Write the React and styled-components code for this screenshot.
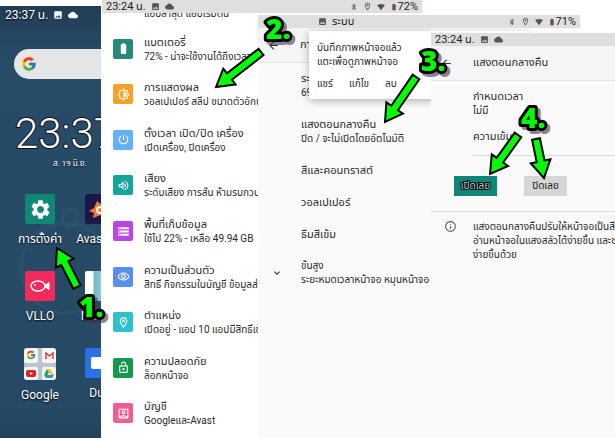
import styled, { createGlobalStyle, css } from "styled-components"
import {
    MdBatteryFull, MdOutlineBrightness6, MdPowerSettingsNew, MdOutlineVolumeUp, MdStorage,
    MdOutlineLocationOn, MdOutlineLockOpen, MdOutlineAccountBox, MdOutlineRemoveRedEye, MdSettings,
    MdImage, MdCloud, MdBluetooth, MdSignalWifi4Bar, MdArrowBack, MdKeyboardArrowDown, MdInfoOutline,
} from "react-icons/md"
import { FcGoogle } from "react-icons/fc"

const GlobalStyle = createGlobalStyle`
    * {
        box-sizing : border-box;
    }
    body {
        margin : 0;
        background : #fff;
        color : #2a2a2a;
        font-family : Roboto, "Noto Sans Thai", "Noto Sans", sans-serif;
        font-size : 10px;
        line-height : 14px;
    }
`
const Stage = styled.main`
    position : relative;
    display : grid;
    grid-template-columns : minmax(0, 101fr) minmax(0, 157fr) minmax(0, 172fr) minmax(0, 185fr);
    grid-template-rows : 13px 2px 13px 5px 1fr;
    min-height : 100vh;
    overflow : hidden;
`

const StatusBar = styled.header`
    display : flex;
    align-items : center;
    gap : 5px;
    height : 13px;
    padding : 0 4px;
    background : #dfdfdf;
    color : #222;
    font-size : 11px;
    white-space : nowrap;
    svg {
        color : #555;
        flex : none;
    }
`
const ListStatus = styled(StatusBar)`
    grid-area : 1 / 2 / 2 / 4;
    margin : 0 8px 0 1px;
    z-index : 2;
`
const DisplayStatus = styled(StatusBar)`
    grid-area : 3 / 3 / 4 / 5;
    margin-right : 35px;
    z-index : 2;
`
const Spacer = styled.span`
    flex : ${p => p.$width ? `0 0 ${p.$width}px` : 1};
`
const Battery = styled.span`
    display : flex;
    align-items : center;
`

const Home = styled.section`
    grid-area : 1 / 1 / 6 / 2;
    margin-top : 6px;
    overflow : hidden;
    color : #fff;
    background :
        radial-gradient(circle at 66px 262px, transparent 43px, #2d5270 45px, transparent 47px),
        radial-gradient(circle at 70px 212px, transparent 6px, #2f5470 8px, transparent 10px),
        linear-gradient(#213d54, #274c68 50px, #264a66 400px, #234259);
    text-shadow : 0 1px 2px #000;
`
const HomeStatus = styled.div`
    display : flex;
    align-items : center;
    gap : 5px;
    padding : 0 5px;
    height : 17px;
    font-size : 12px;
    white-space : nowrap;
`
const Search = styled.div`
    display : flex;
    align-items : center;
    height : 30px;
    margin : 26px 0 0 14px;
    padding-left : 7px;
    border-radius : 15px 0 0 15px;
    background : #e4e6e7;
`
const Clock = styled.div`
    margin : 30px 0 0 15px;
    font-size : 42px;
    font-weight : 300;
    line-height : 50px;
    -webkit-text-stroke : 2px #111;
    paint-order : stroke fill;
    text-shadow : none;
`
const Today = styled.div`
    padding-left : 53px;
    font-size : 8px;
    line-height : 10px;
    white-space : nowrap;
`
const Apps = styled.div`
    display : grid;
    grid-template-columns : 60px 60px;
    grid-auto-rows : 77px;
    margin : 25px 0 0 10px;
`
const AppLink = styled.a`
    display : flex;
    flex-direction : column;
    align-items : center;
    gap : 8px;
    color : #fff;
    text-decoration : none;
    white-space : nowrap;
    font-size : 12px;
`
const AppIcon = styled.span`
    display : flex;
    align-items : center;
    justify-content : center;
    flex : none;
    width : 30px;
    height : 30px;
    border-radius : 2px;
    background : ${p => p.$color};
`
const Folder = styled.span`
    display : grid;
    grid-template-columns : 1fr 1fr;
    gap : 4px;
    width : 32px;
    height : 32px;
    border-radius : 3px;
    background : #bcc3c8;
    overflow : hidden;
`
const FolderCell = styled.span`
    display : flex;
    align-items : center;
    justify-content : center;
    background : #f4f5f6;
    border-radius : 2px;
`

const Settings = styled.section`
    grid-area : 1 / 2 / 6 / 3;
    display : flex;
    flex-direction : column;
    min-width : 0;
    margin-left : 1px;
    padding : 13px 0 2px;
    overflow : hidden;
    background : #fff;
    white-space : nowrap;
`
const Previous = styled.div`
    height : 13px;
    padding-left : 42px;
    overflow : hidden;
    line-height : 2px;
`
const SettingRow = styled.a`
    display : flex;
    flex : 1;
    align-items : center;
    gap : 11px;
    padding-left : 11px;
    color : inherit;
    text-decoration : none;
`
const RowText = styled.div`
    padding-top : 2px;
`
const Tile = styled.span`
    display : flex;
    align-items : center;
    justify-content : center;
    flex : none;
    width : 20px;
    height : 20px;
    border-radius : 2px;
    color : #fff;
    background : ${p => p.$color};
`
const RowTitle = styled.div`
    font-size : 11px;
`

const Display = styled.section`
    grid-area : 4 / 3 / 6 / 4;
    min-width : 0;
    overflow : hidden;
    background : #fafafa;
    white-space : nowrap;
`
const TitleBar = styled.div`
    display : flex;
    align-items : center;
    height : 35px;
    background : #f5f5f5;
    border-bottom : 1px solid #e3e3e3;
    font-size : 11px;
`
const BackButton = styled.button`
    display : flex;
    align-items : center;
    flex : none;
    width : 42px;
    padding : 0 0 0 9px;
    border : none;
    background : none;
    color : #333;
`
const Options = styled.div`
    display : flex;
    flex-direction : column;
    gap : 18px;
    padding : 9px 0 0 43px;
`
const More = styled.button`
    display : flex;
    align-items : center;
    margin-top : 17px;
    padding : 0;
    border : none;
    background : none;
    color : inherit;
    font : inherit;
    text-align : left;
    svg {
        flex : none;
        margin : 0 18px 0 13px;
    }
`
const Toast = styled.div`
    grid-area : 4 / 3 / 6 / 5;
    align-self : start;
    margin : 3px 86px 0 51px;
    padding : 10px 9px 8px 8px;
    background : #fff;
    box-shadow : 0 2px 8px rgba(0,0,0,0.3);
    white-space : nowrap;
`
const ToastActions = styled.div`
    display : flex;
    gap : 16px;
    margin-top : 8px;
`
const TextButton = styled.button`
    padding : 0;
    border : none;
    background : none;
    color : inherit;
    font : inherit;
`

const Night = styled.section`
    grid-area : 5 / 4 / 6 / 5;
    z-index : 1;
    min-width : 0;
    overflow : hidden;
    margin-left : 1px;
    background : #fafafa;
    white-space : nowrap;
`
const Field = styled.div`
    margin-left : 42px;
    padding-top : ${p => p.$top}px;
    ${p => p.$line && css`
        padding-bottom : 11px;
        border-bottom : 1px solid #d8d8d8;
    `}
`
const Buttons = styled.div`
    display : flex;
    align-items : center;
    gap : 27px;
    padding : 20px 0 15px 23px;
    border-bottom : 1px solid #dedede;
`
const Choice = styled.button`
    width : 43px;
    height : 20px;
    padding : 0;
    border : none;
    background : #d6d6d6;
    color : #222;
    font : inherit;
    ${p => p.$on && css`
        background : #0e8577;
        color : #a9d3cd;
        -webkit-text-stroke : 2px #000;
        paint-order : stroke fill;
    `}
`
const Note = styled.div`
    display : flex;
    gap : 16px;
    padding : 8px 0 0 13px;
    svg {
        flex : none;
        color : #666;
    }
`

const Marks = styled.svg`
    position : absolute;
    top : 0;
    left : 0;
    z-index : 3;
    pointer-events : none;
`
const Step = styled.text`
    font-family : "Open Sans", "DejaVu Sans", sans-serif;
    font-size : 28px;
    font-weight : 800;
    fill : #0f0;
    stroke : #000;
    stroke-width : 6px;
    stroke-linejoin : round;
    paint-order : stroke fill;
    filter : drop-shadow(3px 3px 0 rgba(70,50,75,0.6));
`

const settings = [
    { title : "แบตเตอรี่", sub : "72% - น่าจะใช้งานได้ถึงเวลา", color : "#27897a", Icon : MdBatteryFull },
    { title : "การแสดงผล", sub : "วอลเปเปอร์ สลีป ขนาดตัวอักษร", color : "#f9a126", Icon : MdOutlineBrightness6 },
    { title : "ตั้งเวลา เปิด/ปิด เครื่อง", sub : "เปิดเครื่อง, ปิดเครื่อง", color : "#64b0f6", Icon : MdPowerSettingsNew },
    { title : "เสียง", sub : "ระดับเสียง การสั่น ห้ามรบกวน", color : "#15a698", Icon : MdOutlineVolumeUp },
    { title : "พื้นที่เก็บข้อมูล", sub : "ใช้ไป 22% - เหลือ 49.94 GB", color : "#b946e4", Icon : MdStorage },
    { title : "ความเป็นส่วนตัว", sub : "สิทธิ์ กิจกรรมในบัญชี ข้อมูลส่วนตัว", color : "#5b8def", Icon : MdOutlineRemoveRedEye },
    { title : "ตำแหน่ง", sub : "เปิดอยู่ - แอป 10 แอปมีสิทธิ์เข้าถึง", color : "#2fc0cf", Icon : MdOutlineLocationOn },
    { title : "ความปลอดภัย", sub : "ล็อกหน้าจอ", color : "#12984f", Icon : MdOutlineLockOpen },
    { title : "บัญชี", sub : "GoogleและAvast", color : "#ef5e93", Icon : MdOutlineAccountBox },
]

const Arrow = ({ tip, tail }) => {
    const length = Math.hypot(tip[0] - tail[0], tip[1] - tail[1])
    const angle = Math.atan2(tail[1] - tip[1], tail[0] - tip[0]) * 180 / Math.PI
    return (
        <path
            d={`M0 0L17 -10V-4H${length}V4H17V10Z`}
            transform={`translate(${tip[0]} ${tip[1]}) rotate(${angle})`}
            fill="#0f0"
            stroke="#000"
            strokeWidth="2"
        />
    )
}

const Indicators = ({ level }) => (
    <>
        <MdBluetooth size={8}/>
        <MdOutlineLocationOn size={9}/>
        <MdSignalWifi4Bar size={8}/>
        <Battery><MdBatteryFull size={8}/>{level}</Battery>
    </>
)

const HomeScreen = () => (
    <Home>
        <HomeStatus>23:37 น. <MdImage size={10}/><MdCloud size={10}/></HomeStatus>
        <Search><FcGoogle size={16}/></Search>
        <Clock>23:37</Clock>
        <Today>ส. 19 มิ.ย.</Today>
        <Apps>
            <AppLink href="#settings">
                <AppIcon $color="#0f8876"><MdSettings size={23}/></AppIcon>
                การตั้งค่า
            </AppLink>
            <AppLink href="#avast">
                <AppIcon $color="#1c1748">
                    <svg width="24" height="24" viewBox="0 0 24 24">
                        <path d="M9 4L14 8L21 6L20 20L13 18L5 21L6 16L1 14L6 11Z" fill="#f5762a"/>
                        <circle cx="12" cy="13" r="3" fill="none" stroke="#fff" strokeWidth="2"/>
                    </svg>
                </AppIcon>
                Avast An
            </AppLink>
            <AppLink href="#vllo">
                <AppIcon $color="#f52a5c">
                    <svg width="22" height="14" viewBox="0 0 22 14">
                        <ellipse cx="9" cy="7" rx="7" ry="5" fill="none" stroke="#fff" strokeWidth="1.5"/>
                        <path d="M15 7L20 3.500V10.500Z" fill="#fff" stroke="#fff"/>
                        <circle cx="6" cy="6" r="1" fill="#fff"/>
                    </svg>
                </AppIcon>
                VLLO
            </AppLink>
            <AppLink href="#movie">
                <AppIcon $color="linear-gradient(90deg, #fff 8px, #6fb9c4 9px, #cfe8ea)"/>
                Movies
            </AppLink>
            <AppLink href="#google">
                <Folder>
                    <FolderCell><FcGoogle size={10}/></FolderCell>
                    <FolderCell>
                        <svg width="9" height="7" viewBox="0 0 9 7"><path d="M1 7V1L4.500 4L8 1V7" fill="none" stroke="#dd4b3e" strokeWidth="1.6"/></svg>
                    </FolderCell>
                    <FolderCell>
                        <svg width="10" height="7" viewBox="0 0 10 7"><rect width="10" height="7" rx="2" fill="#e02020"/><path d="M4 2L7 3.500L4 5Z" fill="#fff"/></svg>
                    </FolderCell>
                    <FolderCell>
                        <svg width="10" height="9" viewBox="0 0 10 9"><path d="M3 0L0 6L2 9L5 3Z" fill="#1fa463"/><path d="M3 0H6L10 6H7Z" fill="#fbc116"/><path d="M3 6H10L8 9H2Z" fill="#4285f4"/></svg>
                    </FolderCell>
                </Folder>
                Google
            </AppLink>
            <AppLink href="#duo">
                <AppIcon $color="#2a70e8">
                    <svg width="18" height="12" viewBox="0 0 18 12"><rect width="14" height="12" rx="2" fill="#fff"/></svg>
                </AppIcon>
                Duo
            </AppLink>
        </Apps>
    </Home>
)

const App = () => (
    <Stage>
        <GlobalStyle/>
        <HomeScreen/>

        <ListStatus>
            23:24 น. <MdImage size={9}/><MdCloud size={9}/>
            <Spacer/>
            <Indicators level="72%"/>
        </ListStatus>
        <Settings>
            <Previous>แอปล่าสุด แอปเริ่มต้น</Previous>
            {settings.map(({ title, sub, color, Icon }) => (
                <SettingRow key={title} href="#">
                    <Tile $color={color}><Icon size={13}/></Tile>
                    <RowText>
                        <RowTitle>{title}</RowTitle>
                        {sub}
                    </RowText>
                </SettingRow>
            ))}
        </Settings>

        <DisplayStatus>
            <Spacer $width={51}/>
            <MdImage size={9}/>ระบบ
            <Spacer/>
            <Indicators level="71%"/>
        </DisplayStatus>
        <Display>
            <TitleBar>
                <BackButton aria-label="กลับ"><MdArrowBack size={13}/></BackButton>
                การแสดงผล
            </TitleBar>
            <Options>
                <div><RowTitle>ระดับความสว่าง</RowTitle>69%</div>
                <div><RowTitle>แสงตอนกลางคืน</RowTitle>ปิด / จะไม่เปิดโดยอัตโนมัติ</div>
                <RowTitle>สีและคอนทราสต์</RowTitle>
                <RowTitle>วอลเปเปอร์</RowTitle>
                <RowTitle>ธีมสีเข้ม</RowTitle>
            </Options>
            <More>
                <MdKeyboardArrowDown size={12}/>
                <span>ขั้นสูง<br/>ระยะหมดเวลาหน้าจอ หมุนหน้าจออัตโนมัติ</span>
            </More>
        </Display>
        <Toast>
            บันทึกภาพหน้าจอแล้ว<br/>
            แตะเพื่อดูภาพหน้าจอ
            <ToastActions>
                <TextButton>แชร์</TextButton>
                <TextButton>แก้ไข</TextButton>
                <TextButton>ลบ</TextButton>
            </ToastActions>
        </Toast>

        <Night>
            <StatusBar>23:24 น. <MdImage size={9}/><MdCloud size={9}/></StatusBar>
            <TitleBar>
                <BackButton aria-label="กลับ"><MdArrowBack size={13}/></BackButton>
                แสงตอนกลางคืน
            </TitleBar>
            <Field $top={9}><RowTitle>กำหนดเวลา</RowTitle>ไม่มี</Field>
            <Field $top={12} $line><RowTitle>ความเข้ม</RowTitle></Field>
            <Buttons>
                <Choice $on>เปิดเลย</Choice>
                <Choice>ปิดเลย</Choice>
            </Buttons>
            <Note>
                <MdInfoOutline size={13}/>
                <span>
                    แสงตอนกลางคืนปรับให้หน้าจอเป็นสีเหลือง<br/>
                    อ่านหน้าจอในแสงสลัวได้ง่ายขึ้น และช่วย<br/>
                    ง่ายขึ้นด้วย
                </span>
            </Note>
        </Night>

        <Marks width="615" height="438">
            <Arrow tip={[57, 248]} tail={[77, 287]}/>
            <Arrow tip={[216, 87]} tail={[261, 52]}/>
            <Arrow tip={[385, 122]} tail={[416, 77]}/>
            <Arrow tip={[490, 174]} tail={[518, 135]}/>
            <Arrow tip={[544, 178]} tail={[536, 139]}/>
            <Step x="79" y="317">1.</Step>
            <Step x="266" y="39">2.</Step>
            <Step x="421" y="71">3.</Step>
            <Step x="521" y="128">4.</Step>
        </Marks>
    </Stage>
)

export default App
